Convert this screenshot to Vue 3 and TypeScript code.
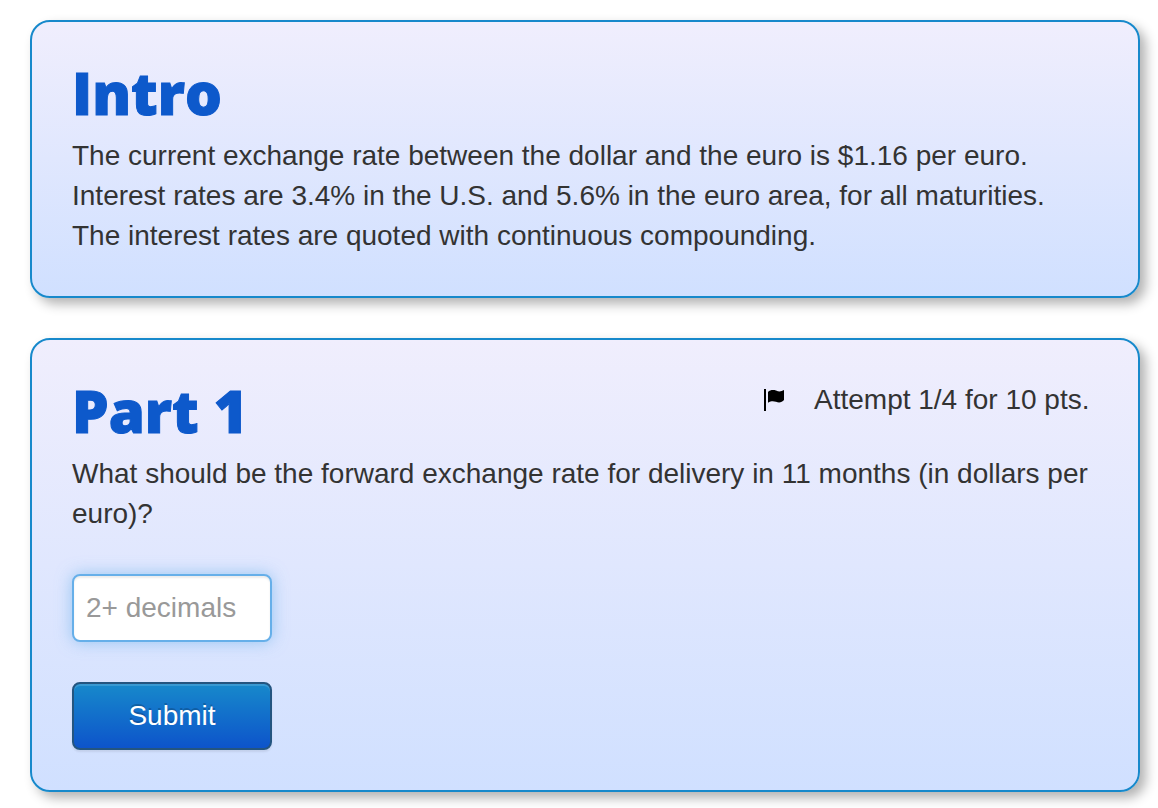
<script setup lang="ts">
import { ref } from 'vue'

const answer = ref('')
</script>

<template>
  <main class="page">
    <section class="card">
      <h1 class="title">Intro</h1>
      <p class="text">The current exchange rate between the dollar and the euro is $1.16 per euro. Interest rates are 3.4% in the U.S. and 5.6% in the euro area, for all maturities. The interest rates are quoted with continuous compounding.</p>
    </section>
    <form class="card" @submit.prevent>
      <header class="head">
        <h1 class="title">Part 1</h1>
        <div class="attempt">
          <svg class="flag" viewBox="0 0 22 22" aria-hidden="true">
            <path d="M0 0H2V22H0ZM4 3C6 1 9 .5 12 1.5C15 2.8 17 2.7 20 1V11C18 13.5 15 14 12 12.8C9 11.8 7 12 4 13.7Z" />
          </svg>
          <span>Attempt 1/4 for 10 pts.</span>
        </div>
      </header>
      <label class="text" for="answer">What should be the forward exchange rate for delivery in 11 months (in dollars per euro)?</label>
      <input id="answer" v-model="answer" class="field" type="text" placeholder="2+ decimals" />
      <button class="submit" type="submit">Submit</button>
    </form>
  </main>
</template>

<style>
body {
  margin: 0;
  background: #fff;
}
</style>

<style scoped>
.page {
  display: flex;
  flex-direction: column;
  gap: 40px;
  padding: 20px 18px 16px 30px;
  font-family: "Liberation Sans", Arial, sans-serif;
  font-size: 28px;
  line-height: 40px;
  color: #333;
}
.card {
  padding: 40px;
  border: 2px solid #1789cb;
  border-radius: 20px;
  background: linear-gradient(#f0eefd, #d0e0ff);
  box-shadow: 6px 6px 12px rgba(0, 0, 0, 0.3);
}
.title {
  margin: 0 0 12px;
  font-family: "Arial Black", "Open Sans", sans-serif;
  font-size: 58px;
  font-weight: 800;
  line-height: 62px;
  color: #0d59cb;
  -webkit-text-stroke: 1px #0d59cb;
}
.text {
  display: block;
  margin: 0;
}
.head {
  display: flex;
  justify-content: space-between;
}
.attempt {
  display: flex;
  align-items: center;
  gap: 28px;
  width: 334px;
  height: 40px;
}
.flag {
  width: 22px;
  height: 22px;
  fill: #000;
}
.field,
.submit {
  display: block;
  box-sizing: border-box;
  width: 200px;
  height: 68px;
  margin: 40px 0 0;
  border-radius: 8px;
  font: inherit;
}
.field {
  padding: 0 12px;
  border: 2px solid #66afe9;
  background: #fff;
  box-shadow: inset 0 2px 2px rgba(0, 0, 0, 0.08), 0 0 16px rgba(102, 175, 233, 0.6);
  color: #555;
  outline: none;
}
.field::placeholder {
  color: #999;
  opacity: 1;
}
.submit {
  border: 2px solid #245580;
  background: linear-gradient(#1789cb, #0d54cb);
  box-shadow: inset 0 2px 0 rgba(255, 255, 255, 0.15), 0 2px 2px rgba(0, 0, 0, 0.08);
  color: #fff;
  text-shadow: 0 -2px 0 rgba(0, 0, 0, 0.2);
}
</style>
